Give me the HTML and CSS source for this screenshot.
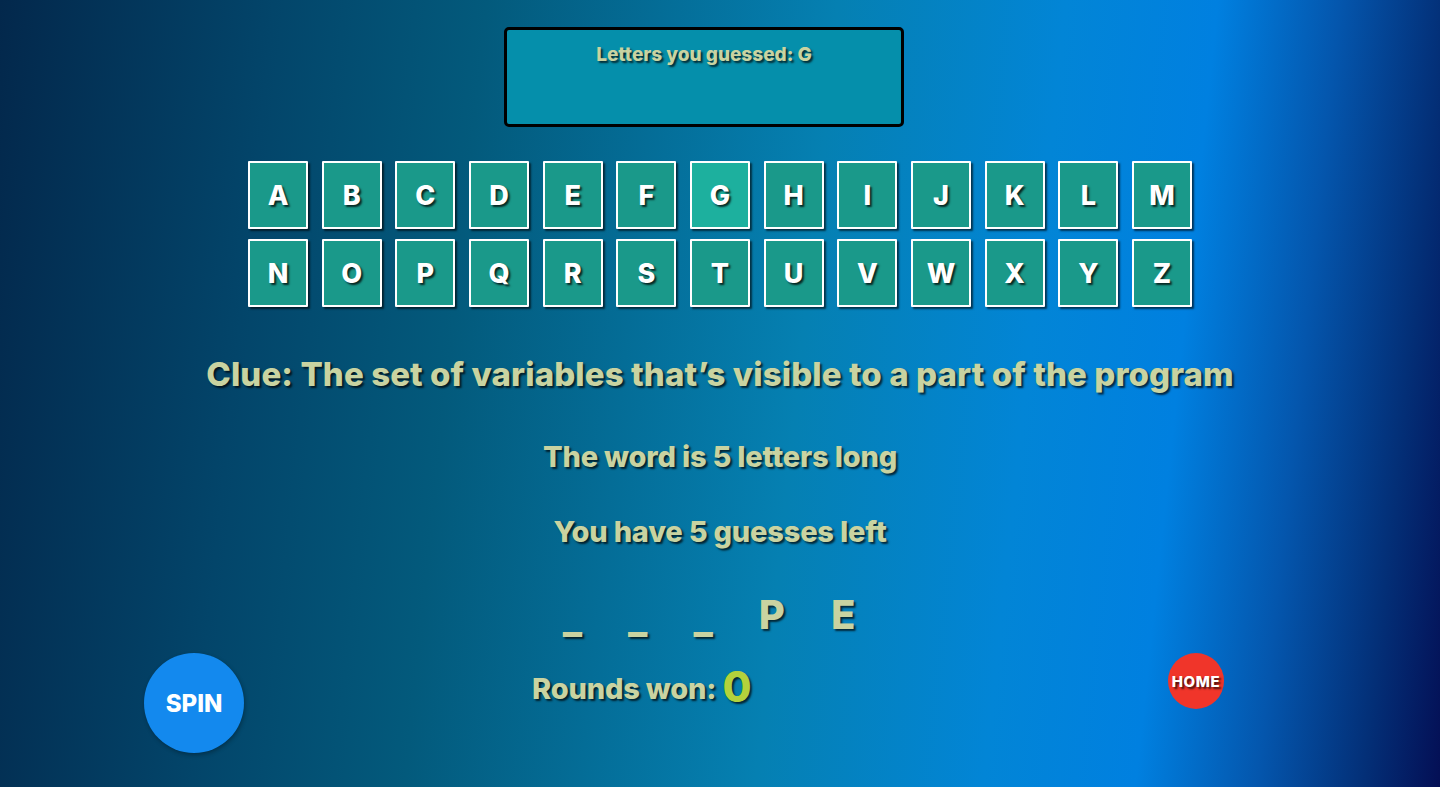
FILE: index.html
```html
<!DOCTYPE html>
<html>
<head>
<meta charset="utf-8">
<link rel="stylesheet" href="styles.css">
</head>
<body>
<main class="game">
  <section class="guessed">
    <p class="guessed-text">Letters you guessed: G</p>
  </section>
  <section class="keyboard">
    <button class="key">A</button><button class="key">B</button><button class="key">C</button><button class="key">D</button><button class="key">E</button><button class="key">F</button><button class="key key-used">G</button><button class="key">H</button><button class="key">I</button><button class="key">J</button><button class="key">K</button><button class="key">L</button><button class="key">M</button>
    <button class="key">N</button><button class="key">O</button><button class="key">P</button><button class="key">Q</button><button class="key">R</button><button class="key">S</button><button class="key">T</button><button class="key">U</button><button class="key">V</button><button class="key">W</button><button class="key">X</button><button class="key">Y</button><button class="key">Z</button>
  </section>
  <h2 class="clue">Clue: The set of variables that’s visible to a part of the program</h2>
  <p class="info info-length">The word is 5 letters long</p>
  <p class="info info-guesses">You have 5 guesses left</p>
  <div class="word">
    <span class="slot slot-blank">_</span><span class="slot slot-blank">_</span><span class="slot slot-blank">_</span><span class="slot">P</span><span class="slot">E</span>
  </div>
  <div class="bottom">
    <button class="spin">SPIN</button>
    <p class="rounds">Rounds won: <span class="rounds-num">0</span></p>
    <button class="home">HOME</button>
  </div>
</main>
</body>
</html>
```

FILE: styles.css
```css
* { box-sizing: border-box; }
html, body {
  margin: 0;
  padding: 0;
  width: 1440px;
  height: 787px;
  overflow: hidden;
}
body {
  font-family: Inter, "Noto Sans", sans-serif;
  background: linear-gradient(96deg, #03284c 0%, #03456a 18%, #035a7c 32%, #0580b2 55%, #0285d6 70%, #0080e0 80%, #0456ad 88%, #032f77 95%, #040f55 100%);
  color: #c9d3a1;
}
.game {
  display: flex;
  flex-direction: column;
  align-items: center;
  height: 787px;
}
.guessed {
  margin-top: 27px;
  margin-right: 32px;
  width: 400px;
  height: 100px;
  border: 3px solid #000;
  border-radius: 5px;
  background: #058fab;
  display: flex;
  justify-content: center;
}
.guessed-text {
  margin: 13px 0 0;
  font-size: 19px;
  font-weight: 800;
  line-height: 24px;
  text-shadow: 2px 2px 2px rgba(0,0,0,0.7);
}
.keyboard {
  margin-top: 34px;
  display: grid;
  grid-template-columns: repeat(13, 60px);
  column-gap: 13.67px;
  row-gap: 10px;
}
.key {
  width: 60px;
  height: 68px;
  padding: 0;
  border: 2px solid #fff;
  border-radius: 1px;
  background: #1a998a;
  color: #fff;
  font-family: Inter, sans-serif;
  font-size: 27px;
  font-weight: 800;
  text-shadow: 2px 2px 2px rgba(0,0,0,0.75);
  box-shadow: 2px 2px 2px rgba(0,0,0,0.6);
}
.key-used { background: #1db09e; }
.clue {
  margin: 47px 0 0;
  font-size: 33px;
  font-weight: 800;
  line-height: 40px;
  letter-spacing: 0.1px;
  text-shadow: 2px 2px 2px rgba(0,0,0,0.7);
}
.info {
  margin: 46px 0 0;
  font-size: 29px;
  font-weight: 800;
  line-height: 34px;
  letter-spacing: -0.2px;
  text-shadow: 2px 2px 2px rgba(0,0,0,0.7);
}
.info-guesses { margin-top: 41px; }
.word {
  margin-top: 42px;
  margin-left: -22px;
  display: flex;
  gap: 46px;
  height: 48px;
}
.slot {
  font-size: 40px;
  font-weight: 800;
  line-height: 48px;
  text-shadow: 2px 2px 2px rgba(0,0,0,0.7);
}
.slot-blank {
  position: relative;
  top: 3px;
}
.bottom {
  margin-top: 14px;
  align-self: stretch;
  display: flex;
  align-items: flex-start;
  padding-left: 144px;
}
.spin {
  width: 100px;
  height: 100px;
  border-radius: 50%;
  border: none;
  background: #1389ee;
  color: #fff;
  font-family: Inter, sans-serif;
  font-size: 24px;
  font-weight: 800;
  padding: 0;
  box-shadow: 1px 2px 4px rgba(0,0,0,0.3);
}
.rounds {
  margin: 14px 0 0 288px;
  font-size: 29px;
  font-weight: 800;
  line-height: 44px;
  letter-spacing: -0.2px;
  text-shadow: 2px 2px 2px rgba(0,0,0,0.7);
}
.rounds-num {
  font-size: 42px;
  color: #b3d23c;
  vertical-align: top;
  line-height: 40px;
}
.home {
  margin-left: auto;
  margin-right: 216px;
  width: 56px;
  height: 56px;
  border-radius: 50%;
  border: none;
  padding: 0;
  background: #f0352a;
  color: #fff;
  font-family: Inter, sans-serif;
  font-size: 15px;
  font-weight: 800;
  letter-spacing: 0.6px;
  text-shadow: 2px 2px 2px rgba(0,0,0,0.7);
}
```
